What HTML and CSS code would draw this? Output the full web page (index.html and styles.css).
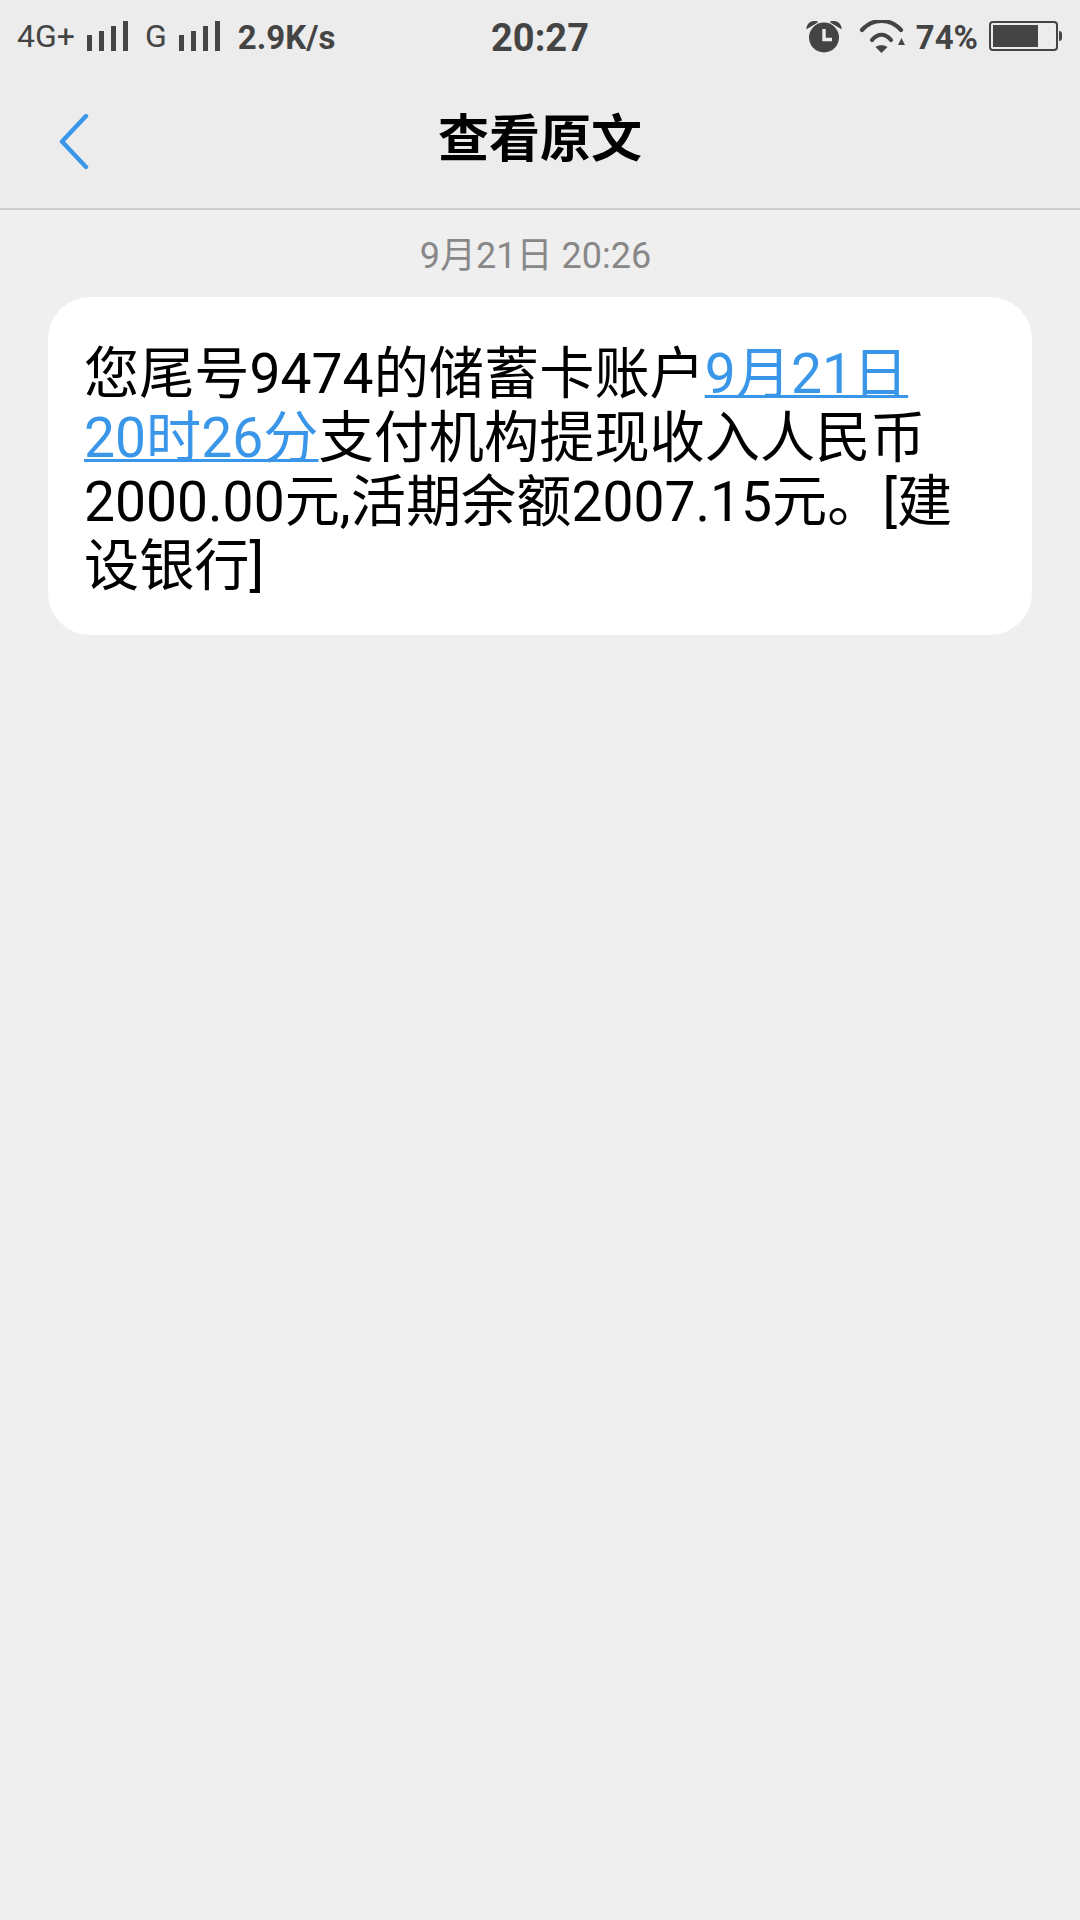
FILE: index.html
```html
<!DOCTYPE html>
<html lang="zh-CN">
<head>
    <meta charset="UTF-8">
    <meta name="viewport" content="width=device-width, initial-scale=1.0">
    <title>查看原文</title>
    <link rel="stylesheet" href="styles.css">
</head>
<body>
<div class="top">
  <div class="status-bar">
    <div class="status-left">
      <span class="net">4G+</span>
      <svg class="signal" width="41" height="30" viewBox="0 0 41 30"><rect x="0" y="14" width="5" height="16"/><rect x="12" y="10" width="5" height="20"/><rect x="24" y="5" width="5" height="25"/><rect x="36" y="0" width="5" height="30"/></svg>
      <span class="net net-g">G</span>
      <svg class="signal" width="41" height="30" viewBox="0 0 41 30"><rect x="0" y="14" width="5" height="16"/><rect x="12" y="10" width="5" height="20"/><rect x="24" y="5" width="5" height="25"/><rect x="36" y="0" width="5" height="30"/></svg>
      <span class="speed">2.9K/s</span>
    </div>
    <div class="clock">20:27</div>
    <div class="status-right">
      <svg class="alarm" width="36" height="33" viewBox="0 0 36 33">
        <circle cx="18" cy="17.5" r="15" fill="#444"/>
        <path d="M1 8 C2 3 6 1 11 2 Z M35 8 C34 3 30 1 25 2 Z" fill="#444" stroke="#444" stroke-width="1.5" stroke-linejoin="round"/>
        <path d="M18 9 V19.5 H26" fill="none" stroke="#ececec" stroke-width="3.4"/>
      </svg>
      <svg class="wifi" width="47" height="33" viewBox="0 0 47 33">
        <path d="M3 10 C14 -2 31 -2 42 10" fill="none" stroke="#444" stroke-width="4.2" stroke-linecap="round"/>
        <path d="M13 20 C19 13 26 13 32 20" fill="none" stroke="#444" stroke-width="4.2" stroke-linecap="round"/>
        <path d="M16.5 27 C20 24.5 25 24.5 28.5 27 L22.5 33 Z" fill="#444"/>
        <path d="M39 25 L46 25 L42.5 18 Z" fill="#444"/>
      </svg>
      <span class="battery-text">74%</span>
      <div class="battery"><div class="battery-level"></div></div>
    </div>
  </div>
  <div class="title-bar">
    <svg class="back" width="30" height="56" viewBox="0 0 30 56"><path d="M27 2 L3 27.5 L27 53" fill="none" stroke="#3a96e8" stroke-width="4.4" stroke-linecap="round" stroke-linejoin="round"/></svg>
    <h1 class="title">查看原文</h1>
  </div>
</div>

<div class="msg-time">9月21日 20:26</div>

<div class="bubble">您尾号9474的储蓄卡账户<a class="link">9月21日20时26分</a>支付机构提现收入人民币2000.00元,活期余额2007.15元。[建设银行]</div>

</body>
</html>
```

FILE: styles.css
```css
body {
    margin: 0;
    width: 1080px;
    height: 1920px;
    overflow: hidden;
    background-color: #efefef;
    font-family: Roboto, "Noto Sans CJK SC", sans-serif;
}

.top {
    height: 208px;
    background-color: #ececec;
    border-bottom: 2px solid #cccccc;
}

/* status bar */
.status-bar {
    display: grid;
    grid-template-columns: 1fr auto 1fr;
    align-items: center;
    height: 72px;
    color: #444;
}

.status-left {
    display: flex;
    align-items: center;
    padding-left: 17px;
    font-size: 32px;
}

.status-right {
    display: flex;
    align-items: center;
    justify-content: flex-end;
    padding-right: 19px;
    font-size: 33px;
    font-weight: 700;
}

.net-g {
    margin-left: 17px;
}

.signal {
    margin-left: 12px;
    fill: #444;
}

.speed {
    margin-left: 18px;
    padding-top: 2px;
    font-size: 33px;
    font-weight: 700;
}

.clock {
    padding-top: 3px;
    font-size: 38px;
    font-weight: 700;
}

.wifi {
    margin-left: 17px;
}

.battery-text {
    margin-left: 10px;
    padding-top: 2px;
}

.battery {
    position: relative;
    box-sizing: border-box;
    width: 69px;
    height: 30px;
    margin-left: 11px;
    margin-right: 3px;
    padding: 2px;
    border: 2px solid #444;
    border-radius: 4px;
}

/* nub on the right side of the battery */
.battery::after {
    content: "";
    position: absolute;
    top: 8px;
    right: -6px;
    width: 3px;
    height: 10px;
    background-color: #444;
    border-radius: 0 3px 3px 0;
}

.battery-level {
    width: 74%;
    height: 100%;
    background-color: #444;
}

/* title bar */
.title-bar {
    position: relative;
    display: flex;
    align-items: center;
    justify-content: center;
    height: 126px;
}

.back {
    position: absolute;
    left: 59px;
    top: 42px;
}

.title {
    margin: 0;
    font-size: 51px;
    font-weight: 700;
    color: #000;
}

/* message */
.msg-time {
    padding-right: 9px;
    margin-top: 21px;
    font-size: 36px;
    line-height: 50px;
    color: #888;
    text-align: center;
}

.bubble {
    box-sizing: border-box;
    width: 984px;
    margin: 16px 0 0 48px;
    padding: 45px 72px 37px 36px;
    background-color: #fff;
    border-radius: 42px;
    font-size: 55.2px;
    line-height: 64px;
    color: #000;
}

.link {
    color: #3a96e8;
    text-decoration: underline;
    text-decoration-thickness: 3px;
}
```
